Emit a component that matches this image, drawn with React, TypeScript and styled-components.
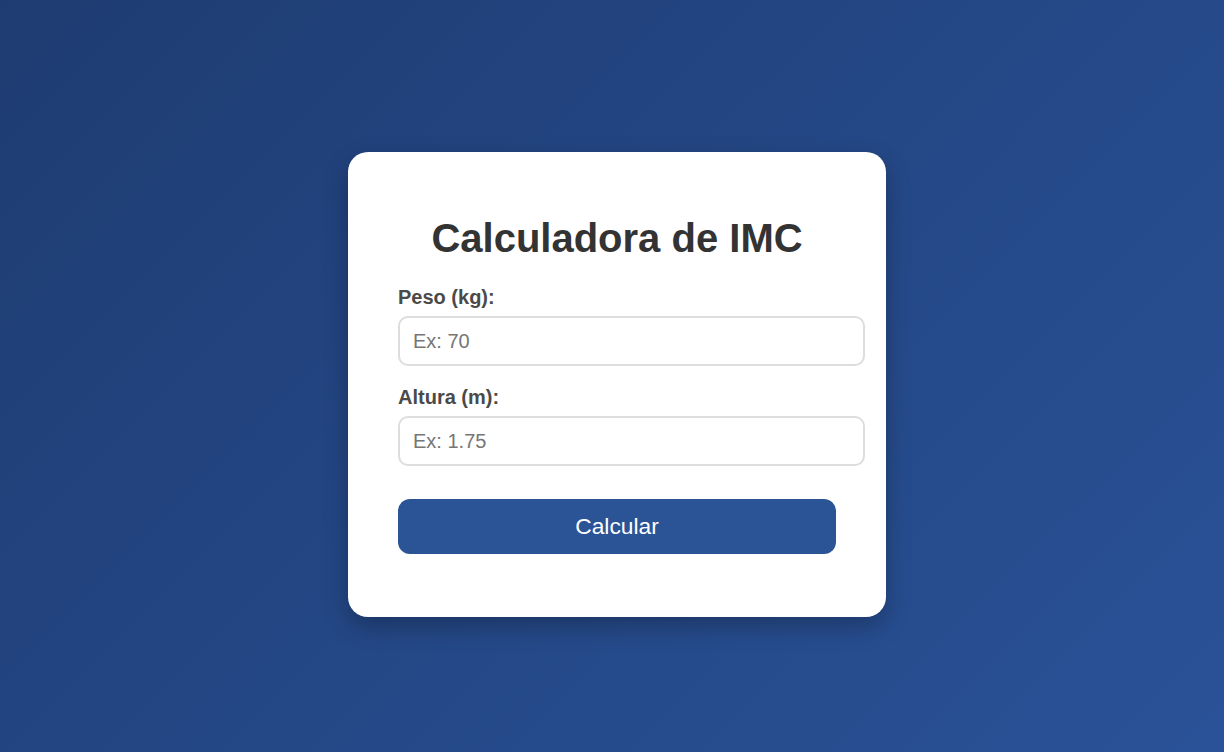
import React from "react";
import styled, { createGlobalStyle } from "styled-components";

const GlobalStyle = createGlobalStyle`
  html, body {
    margin: 0;
    padding: 0;
  }
  body {
    font-family: "Liberation Sans", Arial, sans-serif;
    background: linear-gradient(135deg, #1e3c72 0%, #2a5298 100%);
    min-height: 752px;
  }
`;

const Page = styled.div`
  box-sizing: border-box;
  height: 752px;
  padding: 17px 0 0 10px;
  display: flex;
  align-items: center;
  justify-content: center;
`;

const Card = styled.div`
  width: 438px;
  padding: 63px 50px;
  background: #ffffff;
  border-radius: 20px;
  box-shadow: 0 10px 25px rgba(0, 0, 0, 0.25);
`;

const Title = styled.h1`
  margin: 0 0 25px;
  font-size: 40px;
  line-height: 46px;
  font-weight: bold;
  color: #333333;
  text-align: center;
`;

const Field = styled.div`
  margin-bottom: 20px;
`;

const Label = styled.label`
  display: block;
  margin-bottom: 8px;
  font-size: 20px;
  line-height: 22px;
  font-weight: bold;
  color: #4a4a4a;
`;

const Input = styled.input`
  display: block;
  width: 100%;
  box-sizing: content-box;
  margin: 0;
  padding: 12px 12px 12px 13px;
  border: 2px solid #dddddd;
  border-radius: 10px;
  font-family: "Liberation Sans", Arial, sans-serif;
  font-size: 20px;
  line-height: 22px;
  color: #333333;
  outline: none;
  &::placeholder {
    color: #767676;
  }
`;

const Button = styled.button`
  display: block;
  width: 100%;
  height: 55px;
  margin-top: 33px;
  border: none;
  border-radius: 12px;
  background: #2b5497;
  color: #ffffff;
  font-family: "Liberation Sans", Arial, sans-serif;
  font-size: 22.8px;
  cursor: pointer;
`;

const Form = styled.form`
  display: block;
`;

export default function App() {
  return (
    <>
      <GlobalStyle />
      <Page>
        <Card>
          <Title>Calculadora de IMC</Title>
          <Form onSubmit={(e) => e.preventDefault()}>
            <Field>
              <Label htmlFor="peso">Peso (kg):</Label>
              <Input id="peso" type="number" placeholder="Ex: 70" />
            </Field>
            <Label htmlFor="altura">Altura (m):</Label>
            <Input id="altura" type="number" placeholder="Ex: 1.75" />
            <Button type="submit">Calcular</Button>
          </Form>
        </Card>
      </Page>
    </>
  );
}
